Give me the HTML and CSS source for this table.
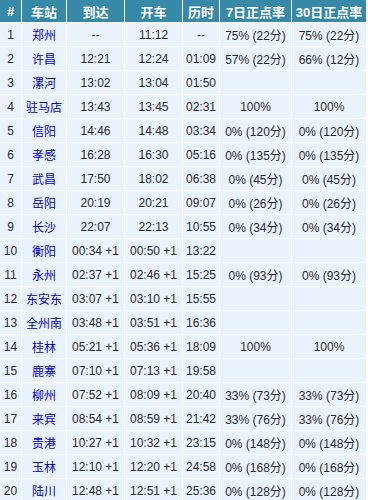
FILE: index.html
```html
<!DOCTYPE html>
<html lang="zh-CN">
<head>
<meta charset="utf-8">
<title>时刻表</title>
<link rel="stylesheet" href="styles.css">
</head>
<body>
<table class="tt">
<colgroup>
<col class="c-no"><col class="c-st"><col class="c-t"><col class="c-t"><col class="c-dur"><col class="c-r7"><col class="c-r30">
</colgroup>
<thead>
<tr><th>#</th><th>车站</th><th>到达</th><th>开车</th><th>历时</th><th>7日正点率</th><th>30日正点率</th></tr>
</thead>
<tbody>
<tr><td>1</td><td class="st">郑州</td><td>--</td><td>11:12</td><td>--</td><td>75% (22分)</td><td>75% (22分)</td></tr>
<tr><td>2</td><td class="st">许昌</td><td>12:21</td><td>12:24</td><td>01:09</td><td>57% (22分)</td><td>66% (12分)</td></tr>
<tr><td>3</td><td class="st">漯河</td><td>13:02</td><td>13:04</td><td>01:50</td><td></td><td></td></tr>
<tr><td>4</td><td class="st">驻马店</td><td>13:43</td><td>13:45</td><td>02:31</td><td>100%</td><td>100%</td></tr>
<tr><td>5</td><td class="st">信阳</td><td>14:46</td><td>14:48</td><td>03:34</td><td>0% (120分)</td><td>0% (120分)</td></tr>
<tr><td>6</td><td class="st">孝感</td><td>16:28</td><td>16:30</td><td>05:16</td><td>0% (135分)</td><td>0% (135分)</td></tr>
<tr><td>7</td><td class="st">武昌</td><td>17:50</td><td>18:02</td><td>06:38</td><td>0% (45分)</td><td>0% (45分)</td></tr>
<tr><td>8</td><td class="st">岳阳</td><td>20:19</td><td>20:21</td><td>09:07</td><td>0% (26分)</td><td>0% (26分)</td></tr>
<tr><td>9</td><td class="st">长沙</td><td>22:07</td><td>22:13</td><td>10:55</td><td>0% (34分)</td><td>0% (34分)</td></tr>
<tr><td>10</td><td class="st">衡阳</td><td>00:34 +1</td><td>00:50 +1</td><td>13:22</td><td></td><td></td></tr>
<tr><td>11</td><td class="st">永州</td><td>02:37 +1</td><td>02:46 +1</td><td>15:25</td><td>0% (93分)</td><td>0% (93分)</td></tr>
<tr><td>12</td><td class="st">东安东</td><td>03:07 +1</td><td>03:10 +1</td><td>15:55</td><td></td><td></td></tr>
<tr><td>13</td><td class="st">全州南</td><td>03:48 +1</td><td>03:51 +1</td><td>16:36</td><td></td><td></td></tr>
<tr><td>14</td><td class="st">桂林</td><td>05:21 +1</td><td>05:36 +1</td><td>18:09</td><td>100%</td><td>100%</td></tr>
<tr><td>15</td><td class="st">鹿寨</td><td>07:10 +1</td><td>07:13 +1</td><td>19:58</td><td></td><td></td></tr>
<tr><td>16</td><td class="st">柳州</td><td>07:52 +1</td><td>08:09 +1</td><td>20:40</td><td>33% (73分)</td><td>33% (73分)</td></tr>
<tr><td>17</td><td class="st">来宾</td><td>08:54 +1</td><td>08:59 +1</td><td>21:42</td><td>33% (76分)</td><td>33% (76分)</td></tr>
<tr><td>18</td><td class="st">贵港</td><td>10:27 +1</td><td>10:32 +1</td><td>23:15</td><td>0% (148分)</td><td>0% (148分)</td></tr>
<tr><td>19</td><td class="st">玉林</td><td>12:10 +1</td><td>12:20 +1</td><td>24:58</td><td>0% (168分)</td><td>0% (168分)</td></tr>
<tr><td>20</td><td class="st">陆川</td><td>12:48 +1</td><td>12:51 +1</td><td>25:36</td><td>0% (128分)</td><td>0% (128分)</td></tr>
</tbody>
</table>
</body>
</html>
```

FILE: styles.css
```css
html, body {
  margin: 0;
  padding: 0;
  background: #ffffff;
}

.tt {
  width: 367px;
  table-layout: fixed;
  border-collapse: separate;
  border-spacing: 0;
  font-family: "Liberation Sans", Arial, "Noto Sans CJK SC", sans-serif;
  font-size: 12px;
  color: #2a2a2a;
}

.c-no { width: 22px; }
.c-st { width: 45px; }
.c-t { width: 58px; }
.c-dur { width: 37px; }
.c-r7 { width: 72px; }
.c-r30 { width: 75px; }

.tt th,
.tt td {
  box-sizing: border-box;
  padding: 0;
  text-align: center;
  white-space: nowrap;
  overflow: hidden;
  border-right: 1px solid #ffffff;
  border-bottom: 1px solid #ffffff;
}

.tt th {
  height: 23px;
  background: #3789a8;
  color: #ffffff;
  font-size: 13px;
  font-weight: bold;
}

.tt td {
  height: 24px;
  background: #eaf3fc;
}

.tt td.st {
  color: #0000cc;
  font-family: "Noto Sans CJK SC", sans-serif;
}
```
